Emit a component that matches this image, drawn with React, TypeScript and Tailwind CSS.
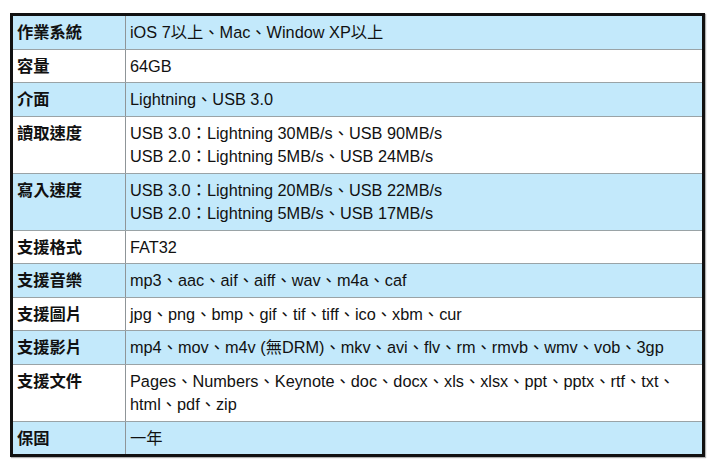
import React from "react";

const rows: { label: string; lines: string[] }[] = [
  { label: "作業系統", lines: ["iOS 7以上、Mac、Window XP以上"] },
  { label: "容量", lines: ["64GB"] },
  { label: "介面", lines: ["Lightning、USB 3.0"] },
  {
    label: "讀取速度",
    lines: [
      "USB 3.0：Lightning 30MB/s、USB 90MB/s",
      "USB 2.0：Lightning 5MB/s、USB 24MB/s",
    ],
  },
  {
    label: "寫入速度",
    lines: [
      "USB 3.0：Lightning 20MB/s、USB 22MB/s",
      "USB 2.0：Lightning 5MB/s、USB 17MB/s",
    ],
  },
  { label: "支援格式", lines: ["FAT32"] },
  { label: "支援音樂", lines: ["mp3、aac、aif、aiff、wav、m4a、caf"] },
  { label: "支援圖片", lines: ["jpg、png、bmp、gif、tif、tiff、ico、xbm、cur"] },
  {
    label: "支援影片",
    lines: ["mp4、mov、m4v (無DRM)、mkv、avi、flv、rm、rmvb、wmv、vob、3gp"],
  },
  {
    label: "支援文件",
    lines: [
      "Pages、Numbers、Keynote、doc、docx、xls、xlsx、ppt、pptx、rtf、txt、",
      "html、pdf、zip",
    ],
  },
  { label: "保固", lines: ["一年"] },
];

export default function App() {
  return (
    <div
      className="w-[720px] h-[470px] bg-white pt-[13px] pl-[10px]"
      style={{ fontFamily: '"Liberation Sans", "Noto Sans CJK TC", sans-serif' }}
    >
      <div className="w-[695px] border-[3px] border-[#111] text-[16.3px] text-[#111] shadow-[1px_1px_1px_rgba(0,0,0,0.3)]">
        {rows.map((r, i) => (
          <div
            key={r.label}
            className={`flex ${i % 2 === 0 ? "bg-[#c3e9fb]" : "bg-white"} ${
              i < rows.length - 1 ? "border-b border-[#9aa3a6]" : ""
            }`}
          >
            <div className="w-[113px] shrink-0 border-r border-[#8f9598] pl-[4px] pt-[5px] pb-[4px] leading-[23.5px] font-bold">
              {r.label}
            </div>
            <div className="flex-1 pl-[4px] pt-[5px] pb-[4px] leading-[23.5px]">
              {r.lines.map((l) => (
                <div key={l}>{l}</div>
              ))}
            </div>
          </div>
        ))}
      </div>
    </div>
  );
}
